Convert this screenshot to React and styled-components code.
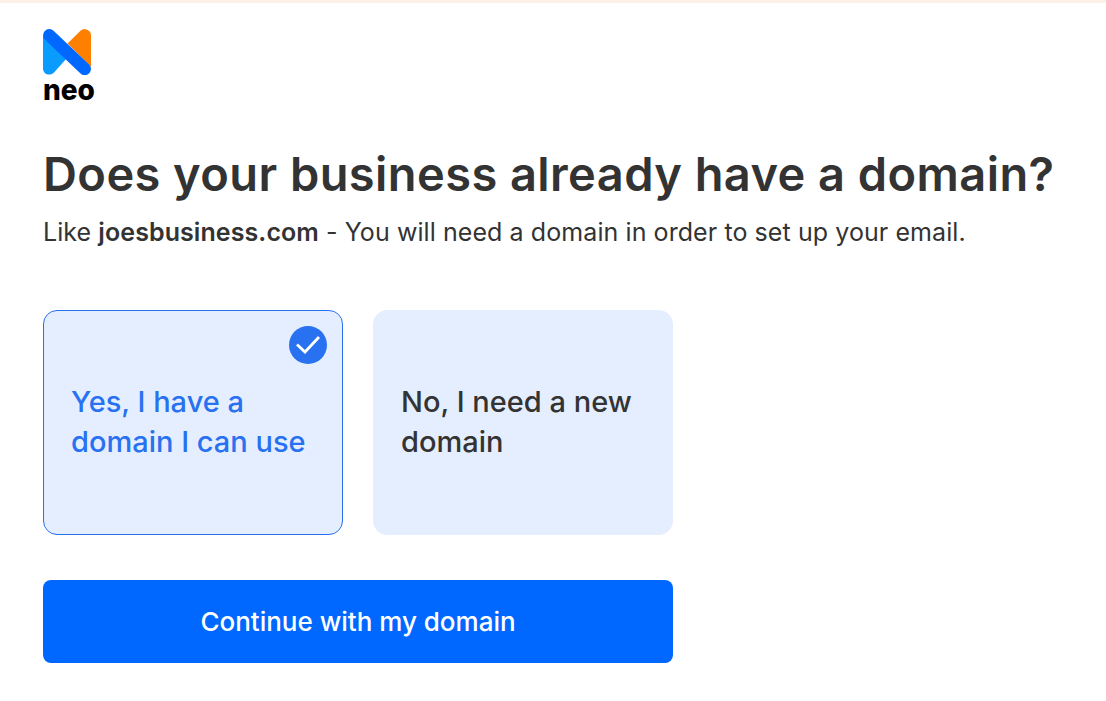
import styled, { createGlobalStyle } from 'styled-components'

const GlobalStyles = createGlobalStyle`
	html, body {
		margin: 0;
		padding: 0;
		background: #fff;
	}
	body {
		font-family: 'Inter', 'Liberation Sans', sans-serif;
		color: #333;
	}
`

const options = [
	{ id: 'yes', lines: ['Yes, I have a', 'domain I can use'], selected: true },
	{ id: 'no', lines: ['No, I need a new', 'domain'], selected: false },
]

const NeoMark = () => (
	<svg width="48" height="46" viewBox="0 0 48 46" aria-hidden="true">
		<path
			d="M24.5 14.5 L37.5 1.8 C41.5 -1.5 48 1 48 6.5 L48 38 Z"
			fill="#ff7f00"
		/>
		<path
			d="M0 6 L0 39.5 C0 45.5 7 47.5 11 43.5 L24 29 Z"
			fill="#0a9bff"
		/>
		<line x1="6.3" y1="6.3" x2="41.8" y2="40" stroke="#0068ff" strokeWidth="12.4" strokeLinecap="round" />
	</svg>
)

const CheckBadge = () => (
	<Badge>
		<svg width="38" height="38" viewBox="0 0 38 38" aria-hidden="true">
			<circle cx="19" cy="19" r="19" fill="#2871f0" />
			<path d="M8 18.5 L16 26 L30 11" fill="none" stroke="#fff" strokeWidth="2.8" />
		</svg>
	</Badge>
)

export default function App() {
	return (
		<>
			<GlobalStyles />
			<Page>
				<Logo>
					<NeoMark />
					<LogoText>neo</LogoText>
				</Logo>
				<Title>Does your business already have a domain?</Title>
				<Subtitle>
					Like <strong>joesbusiness.com</strong> - You will need a domain in order to set up your email.
				</Subtitle>
				<Options>
					{options.map((option) => (
						<OptionCard key={option.id} $selected={option.selected}>
							{option.selected && <CheckBadge />}
							<OptionLabel $selected={option.selected}>
								{option.lines.map((line) => (
									<span key={line}>{line}</span>
								))}
							</OptionLabel>
						</OptionCard>
					))}
				</Options>
				<ContinueButton>Continue with my domain</ContinueButton>
			</Page>
		</>
	)
}

const Page = styled.main`
	box-sizing: border-box;
	height: 701px;
	overflow: hidden;
	border-top: 3px solid #fdf0e6;
	padding: 26px 0 0 43px;
`

const Logo = styled.div`
	display: flex;
	flex-direction: column;
	align-items: flex-start;
	height: 73px;
`

const LogoText = styled.span`
	font-size: 28px;
	font-weight: 800;
	line-height: 24px;
	margin-top: 3px;
	color: #000;
`

const Title = styled.h1`
	margin: 45px 0 0;
	font-size: 47px;
	line-height: 54px;
	font-weight: 600;
	letter-spacing: 0.42px;
	color: #333;
	white-space: nowrap;
`

const Subtitle = styled.p`
	margin: 15px 0 0;
	font-size: 25px;
	line-height: 32px;
	font-weight: 400;
	letter-spacing: 0.08px;
	color: #333;
	white-space: nowrap;

	strong {
		font-weight: 600;
	}
`

const Options = styled.div`
	display: flex;
	gap: 30px;
	margin-top: 62px;
`

const OptionCard = styled.div`
	box-sizing: border-box;
	position: relative;
	width: 300px;
	height: 225px;
	display: flex;
	align-items: center;
	padding: 0 20px 2px 27px;
	background: #e5eefe;
	border-radius: 14px;
	border: 1px solid ${({ $selected }) => ($selected ? '#2871f0' : '#e5eefe')};
`

const Badge = styled.div`
	position: absolute;
	top: 15px;
	right: 15px;
	width: 38px;
	height: 38px;
	line-height: 0;
`

const OptionLabel = styled.div`
	display: flex;
	flex-direction: column;
	font-size: 29px;
	line-height: 40px;
	font-weight: 500;
	white-space: nowrap;
	color: ${({ $selected }) => ($selected ? '#2871f0' : '#333')};
`

const ContinueButton = styled.button`
	display: block;
	width: 630px;
	height: 83px;
	margin-top: 45px;
	border: 0;
	border-radius: 8px;
	background: #0068ff;
	color: #fff;
	font-family: inherit;
	font-size: 26px;
	font-weight: 500;
`
